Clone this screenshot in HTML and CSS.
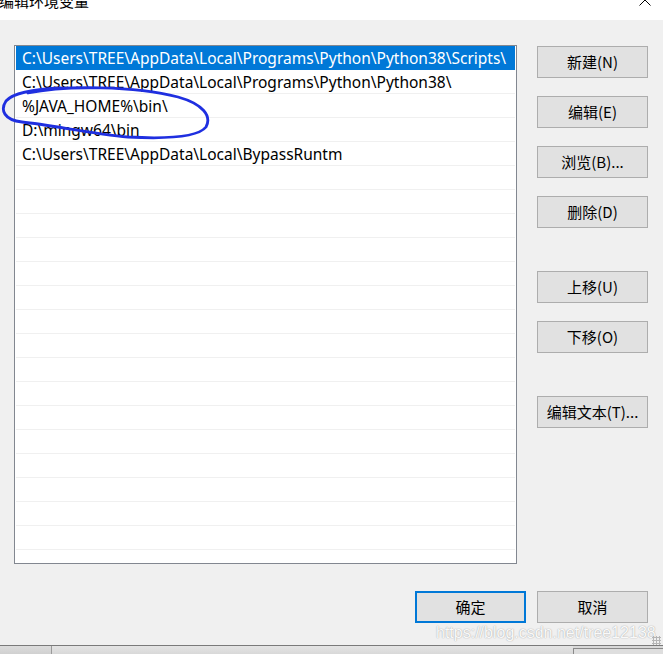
FILE: index.html
```html
<!DOCTYPE html>
<html lang="zh-CN">
<head>
<meta charset="utf-8">
<title>编辑环境变量</title>
<link rel="stylesheet" href="styles.css">
</head>
<body>
<div class="window">
  <div class="titlebar">
    <span class="title">编辑环境变量</span>
    <svg class="close" width="12" height="12" viewBox="0 0 12 12"><path d="M0.5 0.5 L11.5 11.5 M11.5 0.5 L0.5 11.5" stroke="#000" stroke-width="1" fill="none"/></svg>
  </div>
  <div class="body">
    <div class="main">
      <div class="list">
        <div class="row selected">C:\Users\TREE\AppData\Local\Programs\Python\Python38\Scripts\</div>
        <div class="row">C:\Users\TREE\AppData\Local\Programs\Python\Python38\</div>
        <div class="row">%JAVA_HOME%\bin\</div>
        <div class="row">D:\mingw64\bin</div>
        <div class="row">C:\Users\TREE\AppData\Local\BypassRuntm</div>
        <div class="row"></div><div class="row"></div><div class="row"></div><div class="row"></div>
        <div class="row"></div><div class="row"></div><div class="row"></div><div class="row"></div>
        <div class="row"></div><div class="row"></div><div class="row"></div><div class="row"></div>
        <div class="row"></div><div class="row"></div><div class="row"></div><div class="row"></div>
        <div class="row"></div>
      </div>
      <div class="side">
        <button class="btn">新建(N)</button>
        <button class="btn">编辑(E)</button>
        <button class="btn">浏览(B)...</button>
        <button class="btn">删除(D)</button>
        <button class="btn spaced">上移(U)</button>
        <button class="btn">下移(O)</button>
        <button class="btn spaced">编辑文本(T)...</button>
      </div>
    </div>
    <div class="footer">
      <button class="btn primary">确定</button>
      <button class="btn">取消</button>
    </div>
  </div>
  <div class="taskbar">
    <div class="seg seg-a"></div>
    <div class="seg seg-b"></div>
    <div class="seg seg-c"></div>
  </div>
</div>
<svg class="mark" width="220" height="150" viewBox="0 0 220 150">
  <path d="M28 93 C 65 85, 135 86, 178 97 C 203 104, 212 116, 206 127 C 198 137, 165 139, 128 137 C 92 134, 52 125, 22 122 C 4 120, 0 110, 6 101 C 13 93, 33 89, 62 88" fill="none" stroke="#1f2fe0" stroke-width="2.8" stroke-linecap="round"/>
</svg>
<div class="watermark">https://blog.csdn.net/tree12138</div>
<div class="grip"></div>
</body>
</html>
```
FILE: styles.css
```css
html, body {
  margin: 0;
  padding: 0;
  width: 663px;
  height: 654px;
  overflow: hidden;
  background: #f0f0f0;
}
body {
  position: relative;
  font-family: "Noto Sans", "Noto Sans CJK SC", sans-serif;
  font-size: 15px;
  color: #000;
}
.window {
  display: flex;
  flex-direction: column;
  height: 654px;
}
.titlebar {
  height: 20px;
  background: #fff;
  display: flex;
  justify-content: space-between;
  align-items: flex-start;
  flex: none;
}
.title {
  font-family: "Noto Sans CJK SC", sans-serif;
  font-size: 15px;
  line-height: 15px;
  margin-top: -7px;
  margin-left: -1px;
}
.close {
  margin-top: -6px;
  margin-right: 12px;
}
.body {
  height: 625px;
  flex: none;
  background: #f0f0f0;
  box-sizing: border-box;
  padding: 25px 15px 0 14px;
  display: flex;
  flex-direction: column;
}
.main {
  display: flex;
  gap: 20px;
}
.list {
  width: 503px;
  height: 519px;
  box-sizing: border-box;
  border: 1px solid #828790;
  background: #fff;
  padding: 0 1px;
  overflow: hidden;
}
.row {
  height: 24px;
  box-sizing: border-box;
  border-bottom: 1px solid #f0f0f0;
  padding-left: 6px;
  font-size: 15.5px;
  line-height: 24px;
  white-space: nowrap;
}
.row.selected {
  background: #0078d7;
  color: #fff;
  border-bottom-color: #0078d7;
}
.side {
  display: flex;
  flex-direction: column;
  gap: 18px;
  padding-top: 1px;
}
.btn {
  width: 111px;
  height: 32px;
  box-sizing: border-box;
  border: 1px solid #adadad;
  background: #e1e1e1;
  font-family: "Noto Sans CJK SC", sans-serif;
  font-size: 15px;
  color: #000;
  padding: 0;
  margin: 0;
  line-height: 30px;
}
.side .spaced {
  margin-top: 25px;
}
.footer {
  display: flex;
  justify-content: flex-end;
  gap: 11px;
  margin-top: 27px;
}
.btn.primary {
  border: 2px solid #0078d7;
  line-height: 28px;
}
.taskbar {
  flex: 1;
  border-top: 1px solid #7a7a7a;
  background: #d9d9d9;
  display: flex;
}
.seg-a {
  width: 51px;
  background: linear-gradient(#dcdcdc, #d0d0d0);
  border-right: 1px solid #9a9a9a;
}
.seg-b {
  width: 521px;
  background: linear-gradient(#e4e4e4, #d8d8d8);
}
.seg-c {
  flex: 1;
  margin-top: 2px;
  border-top: 1px solid #8a8a8a;
  border-left: 1px solid #8a8a8a;
  background: #dedede;
}
.mark {
  position: absolute;
  left: 0;
  top: 0;
}
.watermark {
  position: absolute;
  left: 436px;
  top: 623px;
  font-family: "Liberation Sans", Arial, sans-serif;
  font-size: 16px;
  line-height: 20px;
  color: rgba(255, 255, 255, 0.95);
  text-shadow: 0 0 1px rgba(0, 0, 0, 0.3), 0 0 2px rgba(0, 0, 0, 0.12);
  white-space: nowrap;
}
.grip {
  position: absolute;
  left: 652px;
  top: 636px;
  width: 9px;
  height: 9px;
  background-image: radial-gradient(circle, #b5b5b5 1px, transparent 1.2px);
  background-size: 3px 3px;
}
```
